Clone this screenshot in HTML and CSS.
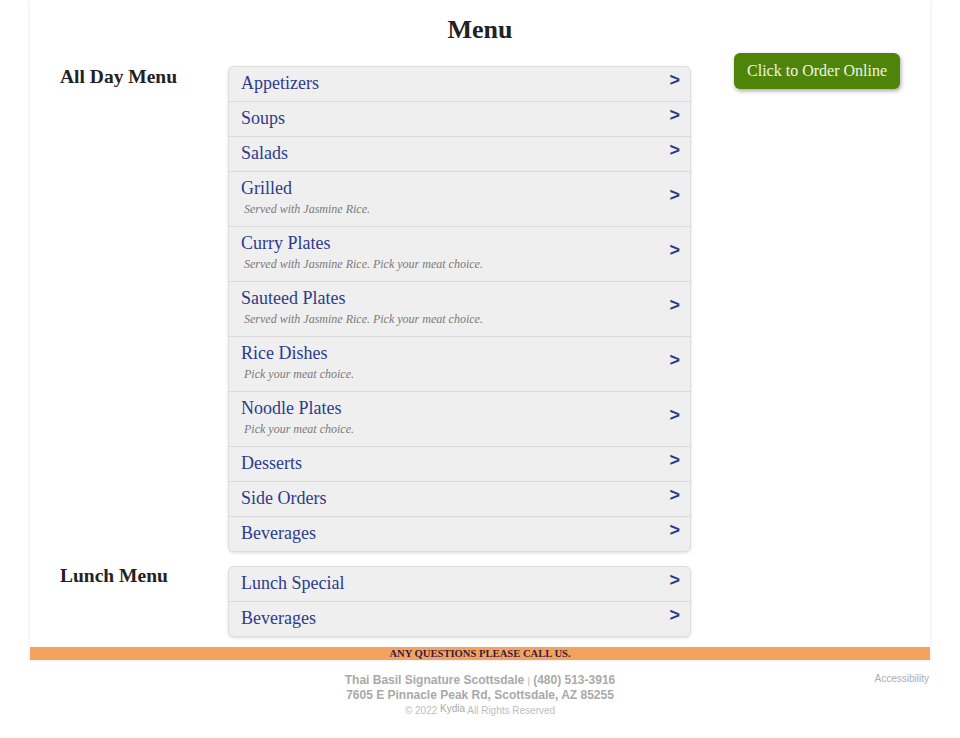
FILE: index.html
```html
<!DOCTYPE html>
<html lang="en">
<head>
<meta charset="utf-8">
<title>Menu</title>
<link rel="stylesheet" href="styles.css">
</head>
<body>
<div class="page">
  <h1 class="page-title">Menu</h1>

  <section class="menu-section">
    <h2 class="section-title">All Day Menu</h2>
    <ul class="cat-list">
      <li class="cat"><div class="cat-text"><span class="cat-name">Appetizers</span></div><span class="cat-arrow">&gt;</span></li>
      <li class="cat"><div class="cat-text"><span class="cat-name">Soups</span></div><span class="cat-arrow">&gt;</span></li>
      <li class="cat"><div class="cat-text"><span class="cat-name">Salads</span></div><span class="cat-arrow">&gt;</span></li>
      <li class="cat"><div class="cat-text"><span class="cat-name">Grilled</span><span class="cat-desc">Served with Jasmine Rice.</span></div><span class="cat-arrow">&gt;</span></li>
      <li class="cat"><div class="cat-text"><span class="cat-name">Curry Plates</span><span class="cat-desc">Served with Jasmine Rice. Pick your meat choice.</span></div><span class="cat-arrow">&gt;</span></li>
      <li class="cat"><div class="cat-text"><span class="cat-name">Sauteed Plates</span><span class="cat-desc">Served with Jasmine Rice. Pick your meat choice.</span></div><span class="cat-arrow">&gt;</span></li>
      <li class="cat"><div class="cat-text"><span class="cat-name">Rice Dishes</span><span class="cat-desc">Pick your meat choice.</span></div><span class="cat-arrow">&gt;</span></li>
      <li class="cat"><div class="cat-text"><span class="cat-name">Noodle Plates</span><span class="cat-desc">Pick your meat choice.</span></div><span class="cat-arrow">&gt;</span></li>
      <li class="cat"><div class="cat-text"><span class="cat-name">Desserts</span></div><span class="cat-arrow">&gt;</span></li>
      <li class="cat"><div class="cat-text"><span class="cat-name">Side Orders</span></div><span class="cat-arrow">&gt;</span></li>
      <li class="cat"><div class="cat-text"><span class="cat-name">Beverages</span></div><span class="cat-arrow">&gt;</span></li>
    </ul>
    <div class="order-col">
      <a class="order-btn" href="#">Click to Order Online</a>
    </div>
  </section>

  <section class="menu-section lunch">
    <h2 class="section-title">Lunch Menu</h2>
    <ul class="cat-list">
      <li class="cat"><div class="cat-text"><span class="cat-name">Lunch Special</span></div><span class="cat-arrow">&gt;</span></li>
      <li class="cat"><div class="cat-text"><span class="cat-name">Beverages</span></div><span class="cat-arrow">&gt;</span></li>
    </ul>
    <div class="order-col"></div>
  </section>

  <div class="call-bar">ANY QUESTIONS PLEASE CALL US.</div>
</div>

<footer class="site-footer">
  <div class="footer-spacer"></div>
  <div class="footer-info">
    <div class="footer-line">Thai Basil Signature Scottsdale <span class="sep">|</span> (480) 513-3916</div>
    <div class="footer-line">7605 E Pinnacle Peak Rd, Scottsdale, AZ 85255</div>
    <div class="footer-copy">© 2022 <span class="brand">Kydia</span> All Rights Reserved</div>
  </div>
  <div class="footer-links"><a href="#" class="access-link">Accessibility</a></div>
</footer>
</body>
</html>
```

FILE: styles.css
```css
* {
  box-sizing: border-box;
}

html, body {
  margin: 0;
  padding: 0;
  background: #ffffff;
}

body {
  font-family: "Liberation Serif", "Times New Roman", serif;
  color: #222;
}

.page {
  width: 900px;
  margin: 0 auto;
  background: #fff;
  box-shadow: 0 0 3px rgba(0, 0, 0, 0.12);
}

.page-title {
  margin: 0;
  padding-top: 15px;
  font-size: 26px;
  line-height: 30px;
  font-weight: bold;
  text-align: center;
  color: #222;
}

.menu-section {
  display: grid;
  grid-template-columns: 168px 463px 1fr;
  padding: 0 30px;
  margin-top: 21px;
  align-items: start;
}

.menu-section.lunch {
  margin-top: 14px;
}

.section-title {
  margin: 0;
  font-size: 19.5px;
  line-height: 22px;
  font-weight: bold;
  color: #222;
}

.lunch .section-title {
  line-height: 20px;
}

.cat-list {
  list-style: none;
  margin: 0;
  padding: 0;
  background: #efefef;
  border: 1px solid #dedede;
  border-radius: 6px;
  box-shadow: 0 1px 3px rgba(0, 0, 0, 0.14);
}

.cat {
  display: flex;
  align-items: center;
  padding: 5px 10px 7px 12px;
  border-bottom: 1px solid #dadada;
}

.cat:last-child {
  border-bottom: none;
}

.cat-text {
  flex: 1;
  display: flex;
  flex-direction: column;
}

.cat-name {
  font-size: 18px;
  line-height: 22px;
  color: #2d3b8e;
}

.cat-desc {
  font-style: italic;
  font-size: 12px;
  line-height: 20px;
  color: #7a7a7a;
  padding-left: 3px;
}

.cat-arrow {
  font-family: "Liberation Sans", Arial, sans-serif;
  font-weight: bold;
  font-size: 18px;
  line-height: 14px;
  color: #2d3b8e;
  margin-bottom: 7px;
}

.order-col {
  display: flex;
  justify-content: flex-end;
}

.order-btn {
  display: inline-block;
  margin-top: -13px;
  padding: 0 13px;
  height: 36px;
  line-height: 36px;
  font-size: 16px;
  color: #eef4e6;
  text-decoration: none;
  background: #4e8509;
  border-radius: 6px;
  box-shadow: 1px 2px 4px rgba(0, 0, 0, 0.35);
}

.call-bar {
  margin-top: 10px;
  height: 13px;
  line-height: 13px;
  background: #f4a35f;
  text-align: center;
  font-size: 10.6px;
  font-weight: bold;
  color: #3a1b45;
}

.site-footer {
  width: 900px;
  margin: 0 auto;
  display: grid;
  grid-template-columns: 1fr auto 1fr;
  padding-top: 13px;
  font-family: "Liberation Sans", Arial, sans-serif;
}

.footer-info {
  text-align: center;
}

.footer-line {
  font-size: 12px;
  line-height: 14px;
  font-weight: bold;
  color: #a9a9a9;
}

.sep {
  font-size: 9px;
  font-weight: normal;
  color: #b5b5b5;
}

.footer-copy {
  margin-top: 2px;
  font-size: 10px;
  line-height: 14px;
  color: #bdbdbd;
}

.brand {
  position: relative;
  top: -2px;
  color: #a9a9a9;
}

.footer-links {
  display: flex;
  justify-content: flex-end;
  padding-right: 1px;
}

.access-link {
  font-size: 10px;
  line-height: 12px;
  color: #adadad;
  text-decoration: none;
}
```
